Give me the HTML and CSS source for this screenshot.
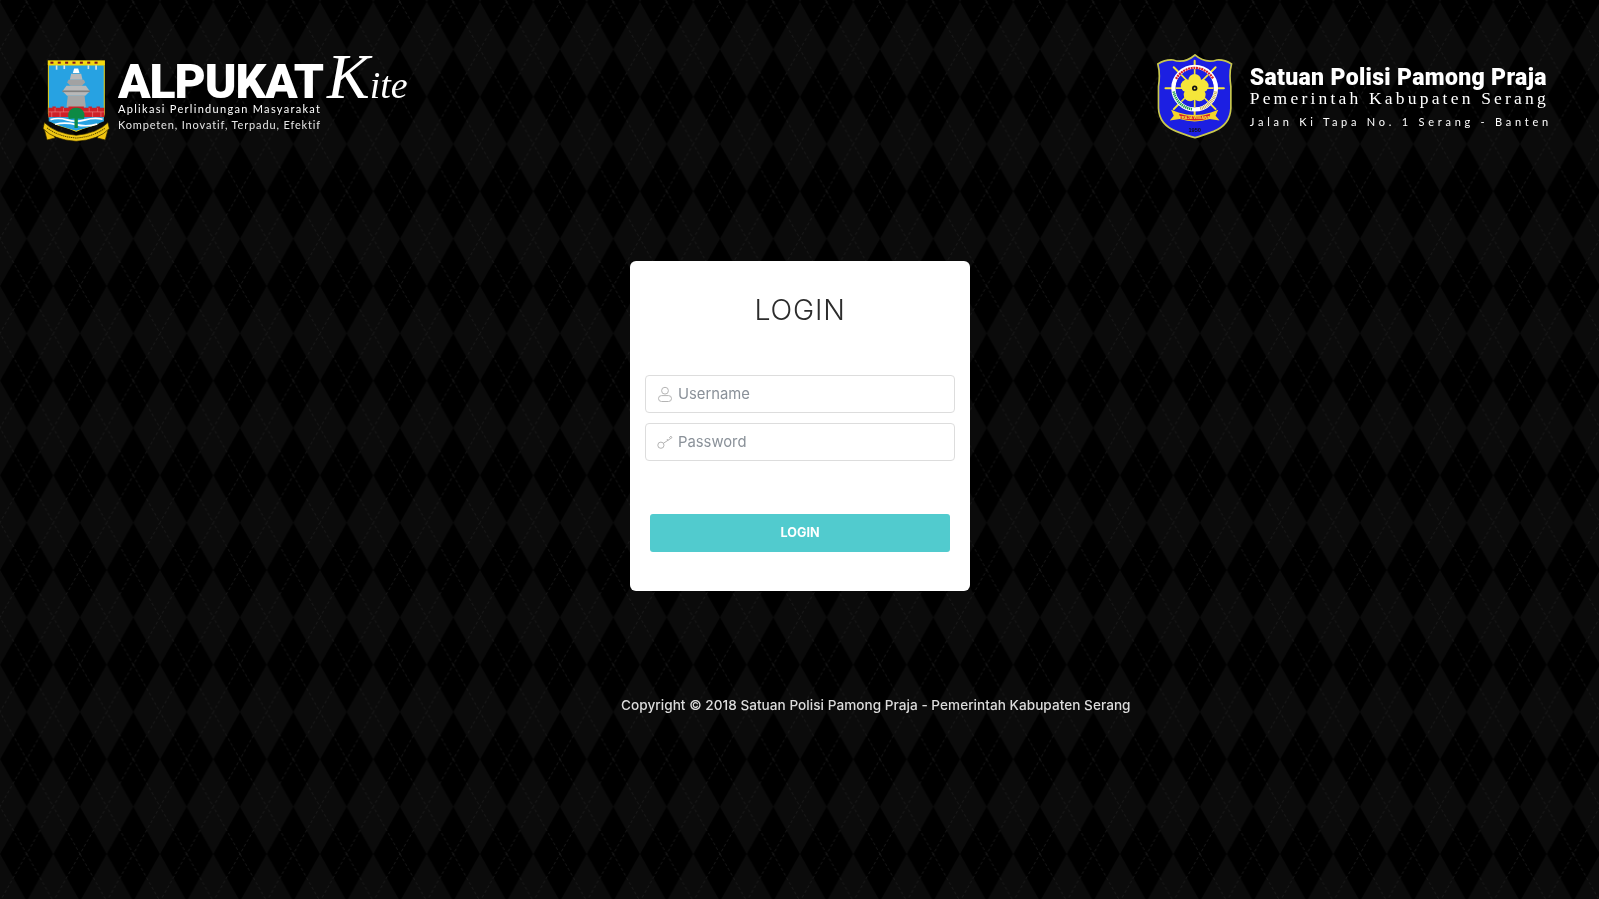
FILE: index.html
```html
<!DOCTYPE html>
<html lang="id">
<head>
<meta charset="utf-8">
<title>Alpukat Kite - Login</title>
<link rel="stylesheet" href="styles.css">
</head>
<body>
<svg class="backdrop" aria-hidden="true">
  <defs>
    <pattern id="argyle" width="53.3333" height="94.6667" patternUnits="userSpaceOnUse" patternTransform="translate(0 2)">
      <rect width="54" height="95" fill="#000"/>
      <g fill="#0b0b0b">
        <path d="M0 0L13.33 23.67L0 47.33L-13.33 23.67Z"/>
        <path d="M53.33 0L66.67 23.67L53.33 47.33L40 23.67Z"/>
        <path d="M0 47.33L13.33 71L0 94.67L-13.33 71Z"/>
        <path d="M53.33 47.33L66.67 71L53.33 94.67L40 71Z"/>
        <path d="M13.33 23.67L26.67 47.33L13.33 71L0 47.33Z"/>
        <path d="M40 23.67L53.33 47.33L40 71L26.67 47.33Z"/>
      </g>
      <path d="M26.67 0L53.33 47.33L26.67 94.67L0 47.33Z" fill="none" stroke="#222" stroke-width="0.7" stroke-dasharray="3 2.4"/>
    </pattern>
  </defs>
  <rect width="100%" height="100%" fill="url(#argyle)"/>
</svg>

<header class="top">
  <div class="brand">
    <svg class="crest-banten" viewBox="15 20 215 260" aria-hidden="true">
      <path d="M40 44H207V190Q205 214 175 224Q145 232 123 242Q100 232 70 224Q42 214 40 190Z" fill="#27a2e2" stroke="#e9d21b" stroke-width="3"/>
      <rect x="38" y="30" width="171" height="14" fill="#f4d90e"/>
      <g fill="#7a1020">
        <rect x="46" y="34" width="9" height="6"/><rect x="68" y="34" width="9" height="6"/><rect x="90" y="34" width="9" height="6"/><rect x="112" y="34" width="9" height="6"/><rect x="134" y="34" width="9" height="6"/><rect x="156" y="34" width="9" height="6"/><rect x="178" y="34" width="9" height="6"/>
      </g>
      <g fill="#d7e4ea">
        <rect x="62" y="45" width="5" height="13"/><rect x="85" y="45" width="5" height="11"/><rect x="157" y="45" width="5" height="11"/><rect x="180" y="45" width="5" height="13"/>
      </g>
      <path d="M113 68L117 54H129L133 68Z" fill="#fff"/>
      <path d="M108 70H138L142 88H104Z" fill="#b9b9b9"/>
      <path d="M100 88H146L150 96L140 106H106L96 96Z" fill="#a2a2a2"/>
      <path d="M94 106H152L164 122L150 136H96L82 122Z" fill="#b8b8b8"/>
      <path d="M82 120H164V125H82Z" fill="#7f7f7f"/>
      <path d="M98 136H148L152 170H94Z" fill="#a6a6a6"/>
      <path d="M40 172H52V168H62V172H76V168H86V172H100V168H146V172H160V168H170V172H184V168H194V172H207V200H40Z" fill="#cf2027"/>
      <path d="M40 184H207M60 172V184M85 172V184M162 172V184M187 172V184M50 184V200M75 184V200M172 184V200M197 184V200" stroke="#ef9a9a" stroke-width="1.5" fill="none"/>
      <path d="M41 200H206V212Q170 228 123 240Q76 228 41 212Z" fill="#27a2e2"/>
      <path d="M46 207Q70 200 96 208T150 208T202 206M60 221Q90 214 123 222T186 220" stroke="#fff" stroke-width="5" fill="none"/>
      <path d="M118 232V204L101 205Q96 190 104 180Q112 170 123 172Q136 170 143 180Q151 192 146 205L128 204V232Z" fill="#0d8a45"/>
      <path d="M26 230L36 268L60 262L54 248Z" fill="#f1c40f" stroke="#2a2200" stroke-width="2"/>
      <path d="M220 230L210 268L186 262L192 248Z" fill="#f1c40f" stroke="#2a2200" stroke-width="2"/>
      <path d="M28 216Q60 248 123 254Q186 248 218 216L222 234Q190 268 123 272Q56 268 24 234Z" fill="#f0c814" stroke="#2a2200" stroke-width="2"/>
      <path d="M36 232Q70 258 123 262Q176 258 210 232" fill="none" stroke="#5a4a00" stroke-width="3" stroke-dasharray="4 2"/>
    </svg>
    <div class="brand-text">
      <div class="brand-name"><span class="brand-word">ALPUKAT</span><span class="brand-script"><span class="brand-script-cap">K</span>ite</span></div>
      <div class="brand-line">Aplikasi Perlindungan Masyarakat</div>
      <div class="brand-line brand-line-second">Kompeten, Inovatif, Terpadu, Efektif</div>
    </div>
  </div>

  <div class="agency">
    <svg class="crest-pol" viewBox="20 12 228 256" aria-hidden="true">
      <path d="M134 15Q165 42 200 30Q222 28 244 42Q236 70 242 110V175Q240 225 190 245Q155 258 134 264Q112 258 78 245Q26 225 24 175V110Q30 70 22 42Q45 28 68 30Q102 42 134 15Z" fill="#1c1fe2" stroke="#c9c84e" stroke-width="5"/>
      <g stroke="#f4e53a" stroke-width="6" stroke-linecap="round">
        <path d="M133 32V198M45 115H221M70 52L196 178M196 52L70 178"/>
      </g>
      <circle cx="133" cy="115" r="64" fill="none" stroke="#fff" stroke-width="13"/>
      <path d="M77 87A64 64 0 0 1 189 87" fill="none" stroke="#d8232a" stroke-width="7" stroke-dasharray="6 2"/>
      <path d="M70 125A64 64 0 0 0 125 178" fill="none" stroke="#1c9a4a" stroke-width="8" stroke-dasharray="4 2"/>
      <path d="M196 125A64 64 0 0 1 148 177" fill="none" stroke="#c9b24a" stroke-width="10" stroke-dasharray="3 2"/>
      <circle cx="133" cy="115" r="57" fill="#1c1fe2"/>
      <g stroke="#f4e53a" stroke-width="5"><path d="M133 58V172M76 115H190M93 75L173 155M173 75L93 155"/></g>
      <g fill="#f5e63a">
        <circle cx="133" cy="91" r="19"/><circle cx="156" cy="108" r="19"/><circle cx="147" cy="135" r="19"/><circle cx="119" cy="135" r="19"/><circle cx="110" cy="108" r="19"/>
      </g>
      <circle cx="133" cy="115" r="8" fill="#111"/>
      <circle cx="133" cy="115" r="3" fill="#f5e63a"/>
      <path d="M62 180L84 188Q133 204 182 188L204 180L196 198L208 212L178 208Q133 222 88 208L58 212L70 198Z" fill="#f4d52a"/>
      <path d="M86 192Q133 208 180 192L176 206Q133 218 90 206Z" fill="#d8232a"/>
      <text class="crest-motto" x="133" y="208" text-anchor="middle">PRAJA WIBAWA</text>
      <text class="crest-year" x="133" y="248" text-anchor="middle">1950</text>
    </svg>
    <div class="agency-text">
      <div class="agency-name">Satuan Polisi Pamong Praja</div>
      <div class="agency-gov">Pemerintah Kabupaten Serang</div>
      <div class="agency-addr">Jalan Ki Tapa No. 1 Serang - Banten</div>
    </div>
  </div>
</header>

<main class="stage">
  <form class="card">
    <h1 class="card-title">LOGIN</h1>
    <div class="field">
      <svg class="field-icon" viewBox="0 0 16 16" aria-hidden="true">
        <circle cx="8" cy="4.7" r="3.4"/>
        <rect x="1.5" y="9.6" width="13" height="5.9" rx="3"/>
      </svg>
      <input class="field-input" type="text" placeholder="Username">
    </div>
    <div class="field">
      <svg class="field-icon" viewBox="0 0 16 16" aria-hidden="true">
        <circle cx="3.9" cy="11.2" r="3.1"/>
        <path d="M6.4 9.3L15 3.6M11 6.6L10 5M12.2 3.8L14 2.2L15 3.6"/>
      </svg>
      <input class="field-input" type="password" placeholder="Password">
    </div>
    <button class="card-button" type="button">LOGIN</button>
  </form>
</main>

<footer class="foot">Copyright © 2018 Satuan Polisi Pamong Praja - Pemerintah Kabupaten Serang</footer>
</body>
</html>
```
FILE: styles.css
```css
* { box-sizing: border-box; }
html, body { margin: 0; height: 100%; }
body {
  background: #000;
  overflow: hidden;
  font-family: Inter, "Liberation Sans", sans-serif;
}
.backdrop {
  position: fixed;
  top: 0;
  left: 0;
  width: 100%;
  height: 100%;
  z-index: -1;
}

.top {
  display: flex;
  justify-content: space-between;
  align-items: flex-start;
  height: 261px;
  padding: 54px 47px 0 40px;
  color: #fff;
}
.brand { display: flex; gap: 6px; margin-top: 3px; }
.crest-banten { width: 72px; height: 87px; display: block; }
.brand-name { display: flex; align-items: baseline; height: 41px; line-height: 40px; }
.brand-word {
  font-family: Roboto, sans-serif;
  font-weight: 900;
  font-size: 48px;
  letter-spacing: -1.1px;
}
.brand-script {
  margin-left: 4px;
  font-family: "Liberation Serif", serif;
  font-style: italic;
  font-size: 38px;
}
.brand-script-cap { font-size: 64px; line-height: 40px; }
.brand-line {
  font-family: Lato, sans-serif;
  font-size: 11px;
  line-height: 14px;
  letter-spacing: 1.3px;
  margin-top: 4px;
  white-space: nowrap;
}
.brand-line-second { margin-top: 2px; letter-spacing: 0.85px; color: #e4e4e4; }

.agency { display: flex; gap: 17px; }
.crest-pol { width: 76px; height: 85px; display: block; }
.agency-text { padding-top: 13px; }
.agency-name {
  font-family: Roboto, sans-serif;
  font-weight: 900;
  font-size: 23px;
  letter-spacing: 0.33px;
  line-height: 21px;
  white-space: nowrap;
}
.agency-gov {
  font-family: "Liberation Serif", serif;
  font-size: 17.5px;
  line-height: 20px;
  letter-spacing: 3.2px;
  white-space: nowrap;
}
.agency-addr {
  font-family: Lato, sans-serif;
  font-size: 11px;
  line-height: 14px;
  letter-spacing: 3.76px;
  margin-top: 7px;
  white-space: nowrap;
}

.stage { display: flex; justify-content: center; padding-left: 1px; }
.card {
  width: 340px;
  height: 330px;
  padding: 29px 15px 0;
  background: #fff;
  border-radius: 6px;
}
.card-title {
  margin: 0 0 45px;
  height: 40px;
  line-height: 40px;
  text-align: center;
  font-weight: 300;
  font-size: 28.5px;
  letter-spacing: 0.8px;
  color: #2c2c2c;
}
.field { position: relative; margin-bottom: 10px; }
.field-icon {
  position: absolute;
  left: 12px;
  top: 11px;
  width: 16px;
  height: 16px;
  fill: none;
  stroke: #b4b4b4;
  stroke-width: 1;
}
.field-input {
  display: block;
  width: 100%;
  height: 38px;
  padding: 0 12px 0 32px;
  border: 1px solid #ddd;
  border-radius: 4px;
  background: #fff;
  font-family: inherit;
  font-size: 14.8px;
  color: #333;
  outline: none;
}
.field-input::placeholder { color: #8a9199; opacity: 1; }
.card-button {
  display: block;
  width: 300px;
  height: 38px;
  margin: 53px 0 0 5px;
  padding: 0 0 2px;
  border: 0;
  border-radius: 3px;
  background: #51cbce;
  color: #fff;
  font-family: inherit;
  font-weight: 700;
  font-size: 12.6px;
}

.foot {
  margin: 105px 0 0 621px;
  line-height: 18px;
  font-size: 13.6px;
  letter-spacing: 0.03px;
  font-weight: 500;
  color: #dcdcdc;
  white-space: nowrap;
}
.crest-motto {
  font-family: "Liberation Sans", sans-serif;
  font-weight: 700;
  font-size: 12px;
  fill: #f5e63a;
}
.crest-year {
  font-family: "Liberation Sans", sans-serif;
  font-weight: 700;
  font-size: 17px;
  fill: #111;
}
```
